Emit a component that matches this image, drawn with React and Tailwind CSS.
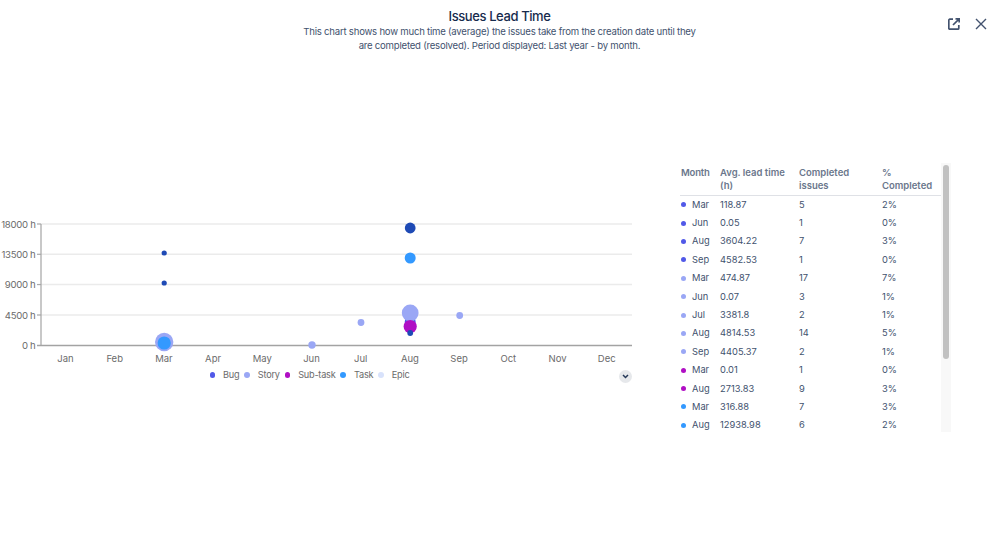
const font = { fontFamily: "Inter, sans-serif" };
const BLUE = "#5159e8", PERI = "#9aa7f5", PURPLE = "#b00fc4", SKY = "#3399ff", EPIC = "#d8e2fb", NAVY = "#1e4ab5";
const rows = [
  [BLUE, "Mar", "118.87", "5", "2%"],
  [BLUE, "Jun", "0.05", "1", "0%"],
  [BLUE, "Aug", "3604.22", "7", "3%"],
  [BLUE, "Sep", "4582.53", "1", "0%"],
  [PERI, "Mar", "474.87", "17", "7%"],
  [PERI, "Jun", "0.07", "3", "1%"],
  [PERI, "Jul", "3381.8", "2", "1%"],
  [PERI, "Aug", "4814.53", "14", "5%"],
  [PERI, "Sep", "4405.37", "2", "1%"],
  [PURPLE, "Mar", "0.01", "1", "0%"],
  [PURPLE, "Aug", "2713.83", "9", "3%"],
  [SKY, "Mar", "316.88", "7", "3%"],
  [SKY, "Aug", "12938.98", "6", "2%"],
];
const months = ["Jan","Feb","Mar","Apr","May","Jun","Jul","Aug","Sep","Oct","Nov","Dec"];
const yTicks = [["18000 h",224],["13500 h",254.3],["9000 h",284.6],["4500 h",315],["0 h",345.5]];
const dots = [
  [164.2,253,2.6,NAVY],[164.2,283,2.6,NAVY],[164.2,342,9.2,PERI],[164.2,343,6.6,SKY],
  [312,345,3.7,PERI],[361,322.5,3.4,PERI],
  [410.2,228,5.4,NAVY],[410.2,258,5.5,SKY],[410.2,322,5.5,BLUE],[410.2,313,8.4,PERI],[410.2,326.5,6.6,PURPLE],[410.2,333,2.9,NAVY],
  [459.7,315.5,3.4,PERI],
];
const legend = [[BLUE,"Bug"],[PERI,"Story"],[PURPLE,"Sub-task"],[SKY,"Task"],[EPIC,"Epic"]];

function Chart() {
  return (
    <svg width="640" height="150" viewBox="0 215 640 150" className="block">
      {yTicks.map(([l,y]) => (
        <g key={l}>
          <line x1="37" x2="632" y1={y} y2={y} stroke={l==="0 h"?"#a3a3a3":"#ebebeb"} strokeWidth={l==="0 h"?1.3:1.5} />
          <line x1="37" x2="41" y1={y} y2={y} stroke="#a3a3a3" />
          <text x="35.5" y={y+3.5} textAnchor="end" fontSize="9.6" letterSpacing="-0.3" fill="#6b6b6b" style={font}>{l}</text>
        </g>
      ))}
      <line x1="41" x2="41" y1="224" y2="345.5" stroke="#a3a3a3" strokeWidth="1.2" />
      {months.map((m,i) => (
        <text key={m} x={65.5+i*49.2} y="361.5" textAnchor="middle" fontSize="9.5" fill="#6b6b6b" style={font}>{m}</text>
      ))}
      {dots.map(([x,y,r,c],i) => <circle key={i} cx={x} cy={y} r={r} fill={c} />)}
    </svg>
  );
}

export default function App() {
  return (
    <div className="relative w-[999px] h-[539px] bg-white overflow-hidden" style={font}>
      <header className="flex flex-col items-center pt-[8px]">
        <h1 className="text-[13px] leading-[17px] font-medium tracking-[-0.4px] text-[#172b4d]">Issues Lead Time</h1>
        <p className="w-[400px] text-center text-[9.6px] leading-[14px] tracking-[-0.23px] text-[#42526e]">
          This chart shows how much time (average) the issues take from the creation date until they are completed (resolved). Period displayed: Last year - by month.
        </p>
      </header>

      <div className="absolute top-[18px] left-[948px] flex items-start gap-[15px] text-[#42526e]">
        <svg width="12" height="12" viewBox="0 0 12 12" fill="none" stroke="currentColor" strokeWidth="1.7">
          <path d="M5 1.2H1.8a1 1 0 0 0-1 1v8a1 1 0 0 0 1 1h8a1 1 0 0 0 1-1V7" />
          <path d="M5 7l6.2-6.2M7.5 .8h3.7v3.7" />
        </svg>
        <svg width="12" height="12" viewBox="0 0 12 12" fill="none" stroke="currentColor" strokeWidth="1.4">
          <path d="M1 1l10 10M11 1L1 11" />
        </svg>
      </div>

      <main className="flex items-start pt-[110px]">
        <section className="relative w-[640px] mt-[52px] shrink-0">
          <Chart />
          <div className="flex items-center pl-[209.5px] mt-[4px] text-[9.2px] tracking-[-0.25px] leading-[12px] text-[#6b6b6b]">
            {legend.map(([c,l]) => (
              <div key={l} className="flex items-center gap-[8px] mr-[5px]">
                <span className="w-[5.5px] h-[5.5px] rounded-full" style={{ background: c }} />
                <span>{l}</span>
              </div>
            ))}
          </div>
          <button className="absolute left-[619px] top-[154.5px] w-[13px] h-[13px] rounded-full bg-[#e6e8eb] flex items-center justify-center text-[#253858]">
            <svg width="7" height="5" viewBox="0 0 7 5" fill="none" stroke="currentColor" strokeWidth="1.5"><path d="M1 1l2.5 2.5L6 1" /></svg>
          </button>
        </section>

        <section className="relative ml-[40px] w-[271px] h-[269px] overflow-hidden">
          <table className="w-[261px] table-fixed border-collapse text-[9.3px] text-[#42526e]">
            <colgroup>
              <col className="w-[40px]" /><col className="w-[79px]" /><col className="w-[83px]" /><col className="w-[59px]" />
            </colgroup>
            <thead>
              <tr className="border-b border-[#dfe1e6] text-left align-top text-[#6b778c] text-[9.5px]">
                <th className="pl-px pt-[3px] pb-[3px] font-semibold leading-[13px] tracking-[-0.2px]">Month</th>
                <th className="pt-[3px] pb-[3px] font-semibold leading-[13px]">Avg. lead time (h)</th>
                <th className="pt-[3px] pb-[3px] pr-[14px] font-semibold leading-[13px]">Completed issues</th>
                <th className="pt-[3px] pb-[3px] font-semibold leading-[13px]">% Completed</th>
              </tr>
            </thead>
            <tbody>
              {rows.map(([c,m,a,n,p],i) => (
                <tr key={i} className="h-[18.4px] leading-[12px]">
                  <td className="pl-px">
                    <div className="flex items-center gap-[6px]">
                      <span className="w-[5px] h-[5px] rounded-full shrink-0" style={{ background: c }} />
                      <span>{m}</span>
                    </div>
                  </td>
                  <td>{a}</td><td>{n}</td><td>{p}</td>
                </tr>
              ))}
            </tbody>
          </table>
          <div className="absolute right-0 top-0 w-[10px] h-full bg-[#f8f8f8]">
            <div className="mx-auto mt-[2px] w-[6px] h-[194px] rounded-full bg-[#c1c1c1]" />
          </div>
        </section>
      </main>
    </div>
  );
}
